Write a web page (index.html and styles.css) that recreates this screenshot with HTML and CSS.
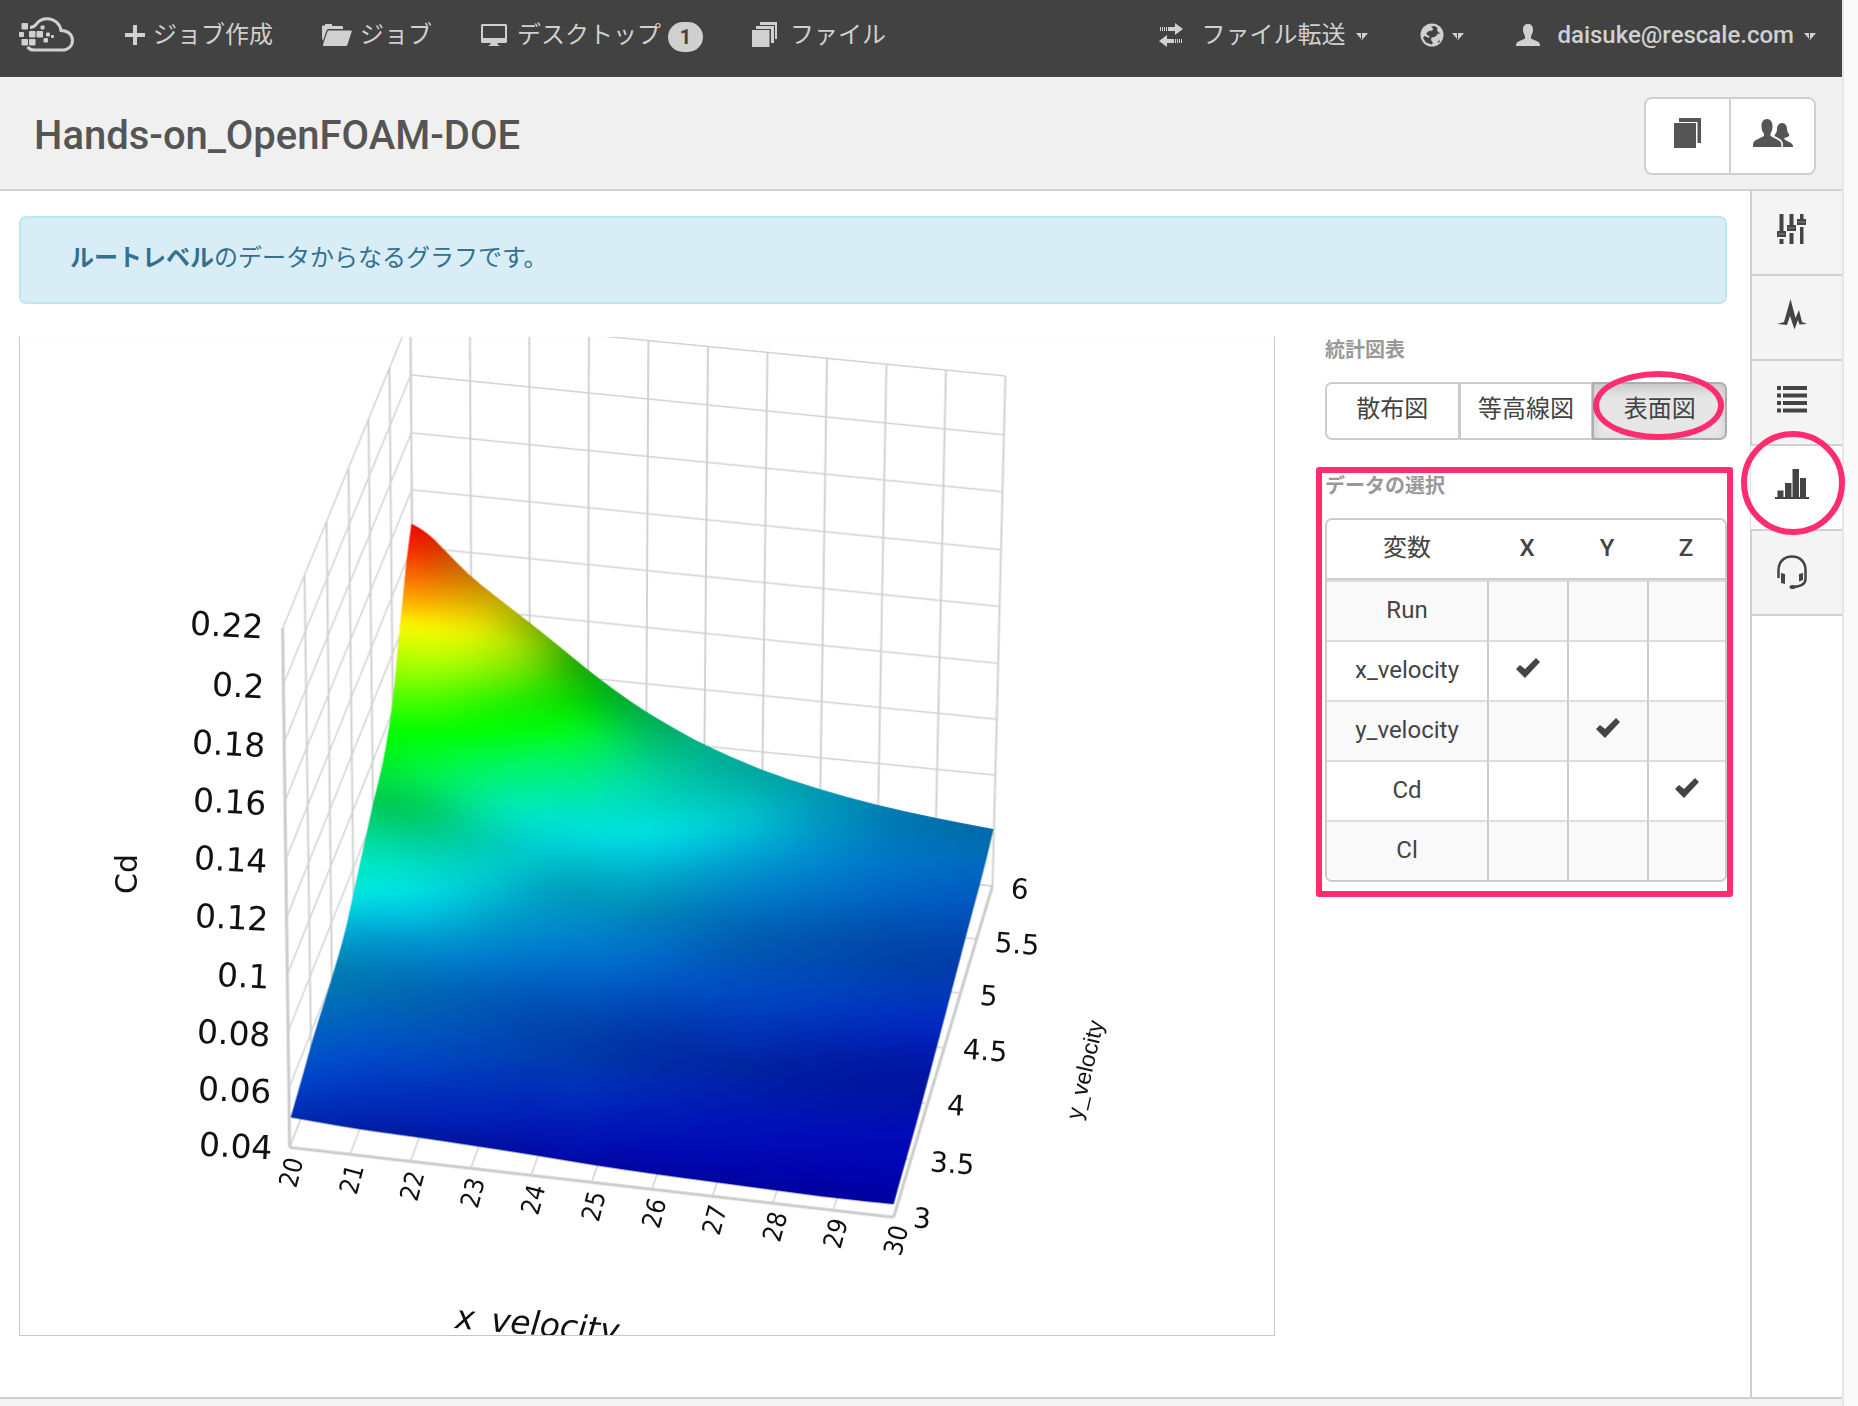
FILE: index.html
```
<!DOCTYPE html>
<html lang="ja">
<head>
  <meta charset="UTF-8">
  <meta name="viewport" content="width=device-width, initial-scale=1.0">
  <title>Hands-on_OpenFOAM-DOE</title>
  <link rel="stylesheet" href="styles.css">
</head>
<body>
  <div class="page">
    <header class="navbar">
      <a class="logo" href="#" aria-label="Home">
        <svg width="56" height="36" viewBox="0 0 56 36">
          <path d="M11 10.500C15 10.500 16 9 17.500 7C20 3.500 24 1.800 28 1.800C35.500 1.800 41 7 42 13.500C49 13.500 53.500 18 53.500 23.500C53.500 29 49 33 43.500 33H15C12 33 10 32 8.500 30" fill="none" stroke="currentColor" stroke-width="3"/>
          <g fill="currentColor">
            <rect x="2.500" y="6" width="6.500" height="6.500" rx="1"/>
            <rect x="0" y="15" width="5" height="5" rx="1"/>
            <rect x="2.500" y="22" width="6.500" height="6.500" rx="1"/>
            <rect x="10" y="14" width="6.500" height="6.500" rx="1"/>
            <rect x="10" y="22" width="6.500" height="6.500" rx="1"/>
            <rect x="17.500" y="14" width="6.500" height="6.500" rx="1"/>
            <rect x="21.500" y="8.500" width="4" height="4" rx="1"/>
            <rect x="27" y="15.500" width="4" height="4" rx="1"/>
            <rect x="24.500" y="21" width="4.500" height="4.500" rx="1"/>
            <rect x="32" y="18" width="3" height="3" rx="1"/>
          </g>
        </svg>
      </a>
      <nav class="nav nav-left">
        <a class="nav-item" href="#">
          <svg width="20" height="20" viewBox="0 0 20 20"><path d="M8 0h4v8h8v4h-8v8H8v-8H0V8h8z" fill="currentColor"/></svg>
          <span>ジョブ作成</span>
        </a>
        <a class="nav-item" href="#">
          <svg width="30" height="22" viewBox="0 0 30 22"><path d="M0 14V2.500Q0 1.500 1 1.500H3V0.500Q3 0 3.500 0H9.500Q10 0 10 0.500V2H20Q21 2 21 3V5H6.500Q5 5 4.500 6.500L1 17zM7 6.500H29Q30 6.500 29.700 7.500L25.500 20.500Q25 22 23.500 22H2Q0.500 22 1 20.500L5.500 7.500Q6 6.500 7 6.500z" fill="currentColor"/></svg>
          <span>ジョブ</span>
        </a>
        <a class="nav-item nav-desktop" href="#">
          <svg width="26" height="22" viewBox="0 0 26 22"><path d="M1.500 0H24.500Q26 0 26 1.500V17.500Q26 19 24.500 19H16.500V20.500L18.500 21.500V22H7.500V21.500L9.500 20.500V19H1.500Q0 19 0 17.500V1.500Q0 0 1.500 0zM2 2V14H24V2z" fill="currentColor" fill-rule="evenodd"/></svg>
          <span>デスクトップ</span>
          <span class="badge">1</span>
        </a>
        <a class="nav-item nav-files" href="#">
          <svg width="26" height="26" viewBox="0 0 26 26"><path d="M0 8H17.500V25H0zM4 4H22V21H19V7H4zM8 0H25V17H23V3H8z" fill="currentColor"/></svg>
          <span>ファイル</span>
        </a>
      </nav>
      <nav class="nav nav-right">
        <a class="nav-item nav-transfer" href="#">
          <svg width="24" height="24" viewBox="0 0 24 24"><path d="M1 4h1v4H1zM3 4h1v4H3zM5 4h1v4H5zM7 4h1v4H7zM9 4h7V0l8 6-8 6V8H9zM22 16h1v4h-1zM20 16h1v4h-1zM18 16h1v4h-1zM16 16h1v4h-1zM15 16H8v-4l-8 6 8 6v-4h7z" fill="currentColor"/></svg>
          <span>ファイル転送</span>
          <svg class="caret" width="12" height="7" viewBox="0 0 12 7"><path d="M0 0H12L6 7zM5 0V7H6V0z" fill="currentColor" fill-rule="evenodd"/></svg>
        </a>
        <a class="nav-item nav-globe" href="#" aria-label="Language">
          <svg width="24" height="24" viewBox="0 0 24 24">
            <circle cx="12" cy="12" r="11.500" fill="currentColor"/>
            <path d="M11 3.500L15 3L17.500 5L17 7.500L20.500 11L18 10.500L17 12L14.500 14L11.500 14.500L11 17L13 20L11.500 21.500L6 19.500L3 15L4.500 13L9 15L9.500 13L7 12L6.500 10L9 8L12.500 7.500L13 5.500z" fill="#424242"/>
            <path d="M17.500 19L20 16.500L19 20z" fill="#424242"/>
          </svg>
          <svg class="caret" width="12" height="7" viewBox="0 0 12 7"><path d="M0 0H12L6 7zM5 0V7H6V0z" fill="currentColor" fill-rule="evenodd"/></svg>
        </a>
        <a class="nav-item nav-user" href="#">
          <svg width="24" height="22" viewBox="0 0 24 22"><path d="M12 0C15 0 17 2 17 5.500C17 8.500 16 10.500 15 12V14.500L21.500 17.500C23.500 18.500 24 19.500 24 22H0C0 19.500 0.500 18.500 2.500 17.500L9 14.500V12C8 10.500 7 8.500 7 5.500C7 2 9 0 12 0z" fill="currentColor"/></svg>
          <span class="email">daisuke@rescale.com</span>
          <svg class="caret" width="12" height="7" viewBox="0 0 12 7"><path d="M0 0H12L6 7zM5 0V7H6V0z" fill="currentColor" fill-rule="evenodd"/></svg>
        </a>
      </nav>
    </header>

    <div class="title-bar">
      <h1>Hands-on_OpenFOAM-DOE</h1>
      <div class="title-actions">
        <button type="button" aria-label="Copy">
          <svg width="28" height="30" viewBox="0 0 28 30"><path d="M0 5H22V30H0zM5 0H27V25H23.500V4H5z" fill="currentColor"/></svg>
        </button>
        <button type="button" aria-label="Share">
          <svg width="40" height="28" viewBox="0 0 40 28">
            <path d="M14 0C17.500 0 19.500 3 19.500 7C19.500 11 18.500 13 17.500 14.500V17L25 21C28 22.500 28.500 24 28.500 28H0C0 24 0.500 22.500 3 21L11 17V14.500C9.500 13 8.500 11 8.500 7C8.500 3 10.500 0 14 0z" fill="currentColor"/>
            <path d="M29 4C32 4 34 6.500 34 10C34 13 35.500 14 36.500 16C35.500 18 34 18.500 31.500 18.500V20.500L37 23.500C39.500 25 40 25.500 40 28H30C30 23.500 29.500 21.500 26 19.500L21.500 17C22 14.500 24 14 24 10C24 6.500 26 4 29 4z" fill="currentColor"/>
          </svg>
        </button>
      </div>
    </div>

    <div class="main">
      <div class="content">
        <div class="alert"><strong>ルートレベル</strong>のデータからなるグラフです。</div>

        <div class="columns">
          <div class="chart">
            <canvas id="surface" width="1256" height="1000"></canvas>
            <svg class="chart-labels" viewBox="0 0 1256 1000">
              <g id="z-labels" class="z-labels"></g>
              <g id="x-labels" class="x-labels"></g>
              <g id="y-labels" class="y-labels"></g>
              <text class="z-title" transform="translate(117 558) rotate(-90)">Cd</text>
              <text class="y-title" transform="translate(1063 785) rotate(-77)">y_velocity</text>
              <text class="x-title" transform="translate(435 993) rotate(5)">x_velocity</text>
            </svg>
          </div>

          <div class="side">
            <h2>統計図表</h2>
            <div class="chart-types">
              <button type="button">散布図</button>
              <button type="button">等高線図</button>
              <button type="button" class="active">表面図</button>
            </div>

            <div class="data-panel">
              <h2>データの選択</h2>
              <div class="table-box">
                <table>
                  <thead>
                    <tr><th class="name">変数</th><th class="axis">X</th><th class="axis">Y</th><th>Z</th></tr>
                  </thead>
                  <tbody>
                    <tr><td>Run</td><td></td><td></td><td></td></tr>
                    <tr><td>x_velocity</td><td><svg class="check" width="24" height="20" viewBox="0 0 24 20"><path d="M0 11L4 7L9 11L20 0L24 4L9 20z" fill="currentColor"/></svg></td><td></td><td></td></tr>
                    <tr><td>y_velocity</td><td></td><td><svg class="check" width="24" height="20" viewBox="0 0 24 20"><path d="M0 11L4 7L9 11L20 0L24 4L9 20z" fill="currentColor"/></svg></td><td></td></tr>
                    <tr><td>Cd</td><td></td><td></td><td><svg class="check" width="24" height="20" viewBox="0 0 24 20"><path d="M0 11L4 7L9 11L20 0L24 4L9 20z" fill="currentColor"/></svg></td></tr>
                    <tr><td>Cl</td><td></td><td></td><td></td></tr>
                  </tbody>
                </table>
              </div>
            </div>
          </div>
        </div>
      </div>

      <nav class="rail">
        <a href="#" aria-label="Settings">
          <svg width="30" height="30" viewBox="0 0 30 30"><path d="M2.500 0H6.500V17H9V23H0V17H2.500zM2.500 25H6.500V30H2.500zM12.500 0H16.500V11H19V17H10V11H12.500zM12.500 19H16.500V30H12.500zM23 0H26.500V5H29V11H20V5H23zM23 13H26.500V30H23z" fill="currentColor"/><path d="M1 20H8M11 14H18M21 8H28" stroke="#888"/></svg>
        </a>
        <a href="#" aria-label="Status">
          <svg width="30" height="30" viewBox="0 0 30 30"><path d="M0 25L7 23L13.500 0L18.500 19L22 11L25 23L30 25L22.500 25.500L21 21L17.500 30.500L13 17L10 26z" fill="currentColor"/></svg>
        </a>
        <a href="#" aria-label="Logs">
          <svg width="30" height="30" viewBox="0 0 30 30"><path d="M0 2H4V6H0zM6 2H30V6H6zM0 9.500H4V13.500H0zM6 9.500H30V13.500H6zM0 17H4V21H0zM6 17H30V21H6zM0 24.500H4V28.500H0zM6 24.500H30V28.500H6z" fill="currentColor"/></svg>
        </a>
        <a href="#" class="active" aria-label="Charts">
          <svg width="34" height="30" viewBox="0 0 34 30"><path d="M0 28H2.500V21.500H8.500V28H10V14H16.500V28H17.500V0H24V28H25V9H31V28H34V30H0z" fill="currentColor"/></svg>
        </a>
        <a href="#" aria-label="Support">
          <svg width="30" height="34" viewBox="0 0 30 34"><path d="M1.500 23V15C1.500 7 7 1.500 15 1.500S28.500 7 28.500 15V24C28.500 29 24 31.500 16 32" fill="none" stroke="currentColor" stroke-width="2.500"/><path d="M4 18L8 19V29L4 28zM26 18L22 19V26.500L26 25z" fill="currentColor"/><ellipse cx="15.500" cy="32" rx="3" ry="2" fill="currentColor"/></svg>
        </a>
      </nav>
    </div>
    <footer class="footer"></footer>
  </div>
  <div class="gutter"></div>

  <script src="chart.js"></script>
</body>
</html>
```
FILE: styles.css
```
*,
*::after {
  box-sizing: border-box;
}

body {
  margin: 0;
  min-height: 100vh;
  display: flex;
  font-family: Roboto, "Noto Sans CJK JP", sans-serif;
  font-size: 24px;
  line-height: 36px;
  color: #444;
  background: #fff;
}

svg {
  display: block;
  flex: none;
}

a {
  color: inherit;
  text-decoration: none;
}

button {
  font: inherit;
  color: inherit;
  cursor: pointer;
}

.page {
  flex: 1;
  min-width: 0;
  display: flex;
  flex-direction: column;
}

.gutter {
  width: 16px;
  background: #fafafa;
  border-left: 2px solid #e7e7e7;
}

/* top navigation */
.navbar {
  display: flex;
  align-items: center;
  height: 77px;
  padding: 0 26px 8px 19px;
  background: #424242;
  color: #d0d0d0;
}

.nav {
  display: flex;
  align-items: center;
}

.nav-left {
  margin-left: 50px;
  gap: 49px;
}

.nav-right {
  margin-left: auto;
  gap: 52px;
}

.nav-item {
  display: flex;
  align-items: center;
  gap: 8px;
  white-space: nowrap;
}

.nav-desktop {
  gap: 10px;
}

.nav-files {
  gap: 12px;
}

.nav-transfer {
  gap: 18px;
}

.nav-user {
  gap: 17px;
}

.nav-transfer .caret,
.nav-user .caret {
  margin-left: -7px;
}

.caret {
  margin-top: 4px;
}

.email {
  font-weight: 500;
}

.badge {
  width: 35px;
  height: 30px;
  margin-top: 4px;
  margin-left: -3px;
  border-radius: 15px;
  background: #d0d0d0;
  color: #424242;
  font-size: 20px;
  line-height: 30px;
  font-weight: 700;
  text-align: center;
}

/* job title */
.title-bar {
  display: flex;
  align-items: center;
  justify-content: space-between;
  height: 114px;
  padding: 5px 26px 0 34px;
  background: #f0f0f0;
  border-bottom: 2px solid #d2d2d2;
}

h1 {
  margin: 0;
  font-size: 40px;
  line-height: 48px;
  font-weight: 500;
  color: #555;
}

.title-actions {
  display: flex;
  width: 172px;
  height: 78px;
  border: 2px solid #d0d0d0;
  border-radius: 8px;
  background: #fff;
  color: #555;
}

.title-actions button {
  flex: 1;
  display: flex;
  align-items: center;
  justify-content: center;
  padding: 0 0 6px;
  border: 0;
  background: none;
}

.title-actions button + button {
  border-left: 2px solid #d0d0d0;
}

.main {
  flex: 1;
  display: flex;
}

.content {
  flex: 1;
  min-width: 0;
  padding: 25px 23px 60px 19px;
}

.alert {
  height: 88px;
  padding: 22px 49px;
  border: 2px solid #bce8f1;
  border-radius: 7px;
  background: #d9edf7;
  color: #31708f;
}

.columns {
  display: flex;
  align-items: flex-start;
  gap: 50px;
  margin-top: 32px;
}

/* surface plot */
.chart {
  position: relative;
  flex: 1;
  min-width: 0;
  aspect-ratio: 1256 / 1000;
  overflow: hidden;
  border: 1px solid #c8c8c8;
  border-top-color: #fafafa;
}

.chart canvas,
.chart-labels {
  position: absolute;
  top: 0;
  left: 0;
  width: 100%;
  height: 100%;
}

.chart-labels {
  font-family: "DejaVu Sans", sans-serif;
  fill: #111;
}

.z-labels {
  font-size: 33px;
  text-anchor: end;
}

.x-labels {
  font-family: "DejaVu Sans Condensed", "DejaVu Sans", sans-serif;
  font-size: 26px;
  font-stretch: condensed;
  text-anchor: end;
}

.y-labels {
  font-size: 28px;
}

.z-title {
  font-size: 30px;
}

.y-title {
  font-family: "Liberation Sans", sans-serif;
  font-size: 23px;
}

.x-title {
  font-size: 33px;
  font-style: oblique;
}

/* right column */
.side {
  width: 402px;
}

h2 {
  margin: 0 0 19px;
  font-size: 20px;
  line-height: 26px;
  font-weight: 700;
  color: #999;
}

.chart-types {
  position: relative;
  display: flex;
  height: 58px;
}

.chart-types button {
  flex: 1 1 0;
  padding: 0 0 4px;
  border: 2px solid #ccc;
  background: #fff;
  white-space: nowrap;
}

.chart-types button + button {
  margin-left: -1px;
}

.chart-types button:first-child {
  border-radius: 7px 0 0 7px;
}

.chart-types button:last-child {
  border-radius: 0 7px 7px 0;
}

.chart-types .active {
  border-color: #adadad;
  background: #e6e6e6;
  box-shadow: inset 0 6px 10px rgba(0, 0, 0, 0.125);
}

/* highlight marks */
.chart-types::after,
.data-panel::after,
.rail .active::after {
  content: "";
  position: absolute;
  border: 6px solid #ff2d6e;
  pointer-events: none;
}

.chart-types::after {
  top: -11px;
  right: 3px;
  width: 131px;
  height: 69px;
  border-radius: 50%;
}

.data-panel {
  position: relative;
  margin-top: 33px;
}

.data-panel::after {
  inset: -6px -6px -15px -9px;
  border-radius: 3px;
}

.side {
  padding-top: 1px;
}

.table-box {
  border: 2px solid #ccc;
  border-radius: 7px;
  overflow: hidden;
}

table {
  width: 100%;
  table-layout: fixed;
  border-collapse: separate;
  border-spacing: 0;
  text-align: center;
}

th,
td {
  height: 60px;
  padding: 0 0 2px;
  border-top: 2px solid #ddd;
}

th {
  font-weight: 500;
  border-top: 0;
  border-bottom: 2px solid #ccc;
}

.name {
  width: 160px;
  font-weight: 400;
}

.axis {
  width: 80px;
}

td + td {
  border-left: 2px solid #ccc;
}

tbody tr:nth-child(odd) {
  background: #f9f9f9;
}

.check {
  margin: 0 auto 4px;
}

/* tab rail */
.rail {
  width: 92px;
  border-left: 2px solid #d0d0d0;
}

.rail a {
  position: relative;
  display: flex;
  align-items: center;
  justify-content: center;
  height: 85px;
  padding: 0 10px 8px 0;
  border-bottom: 2px solid #d0d0d0;
  background: #f4f4f4;
}

.rail .active {
  z-index: 1;
  margin-left: -2px;
  border-left: 1px solid #e0e0e0;
  background: #fff;
}

.rail a:last-child {
  padding-bottom: 2px;
}

.rail .active::after {
  top: -15px;
  left: -10px;
  width: 104px;
  height: 104px;
  border-radius: 50%;
}

.footer {
  height: 9px;
  border-top: 2px solid #d0d0d0;
  background: #f4f4f4;
}
```
FILE: chart.js
```
const canvas = document.getElementById('surface');
const ctx = canvas.getContext('2d');
const W = canvas.width;
const H = canvas.height;

function mix(a, b, t) {
  return a + (b - a) * t;
}

function line(x1, y1, x2, y2, width) {
  ctx.lineWidth = width;
  ctx.beginPath();
  ctx.moveTo(x1, y1);
  ctx.lineTo(x2, y2);
  ctx.stroke();
}

// Corners of the box, in chart units. y values per z level (0.22 down to 0.04)
const frontY = [292, 348, 406, 465, 524, 582, 639, 696, 753, 812];
const cornerY = [-20, 38, 96, 153, 210, 267, 324, 381, 437, 493];
const rightY = [39, 98, 155, 213, 270, 327, 383, 439, 495, 550];

// Floor positions per y value (3 up to 6)
const sideTop = [[263, 292], [285, 239], [307, 186], [329, 133], [349, 81], [370, 31], [391, -20]];
const sideBottom = [[270, 812], [292, 757], [313, 703], [335, 649], [355, 596], [375, 544], [395, 493]];
const rightFloor = [[875, 882], [890, 824], [907, 768], [924, 712], [940, 657], [957, 603], [974, 550]];

function drawGrid() {
  ctx.strokeStyle = '#d2d2d2';
  for (let i = 0; i < 10; i++) {
    const t = i / 9;
    line(mix(263, 270, t), frontY[i], mix(391, 395, t), cornerY[i], 1.5);
    line(mix(391, 395, t), cornerY[i], mix(987, 974, t), rightY[i], 1.5);
  }
  for (let i = 0; i < 7; i++) {
    line(...sideTop[i], ...sideBottom[i], 2);
    line(...sideBottom[i], ...rightFloor[i], 1.5);
  }
  for (let i = 0; i <= 10; i++) {
    const t = i / 10;
    line(mix(391, 987, t), mix(-20, 39, t), mix(395, 974, t), mix(493, 550, t), 2);
    line(mix(395, 974, t), mix(493, 550, t), mix(270, 875, t), mix(812, 882, t), 1.5);
  }
  // axes
  ctx.strokeStyle = '#ccc';
  line(263, 292, 270, 812, 3);
  line(270, 812, 875, 882, 3);
  line(875, 882, 974, 550, 3);
}

// Back, right, front and left edges, clockwise from the peak
const edges = [
  [[392, 187], [406, 194], [423, 211], [450, 239], [478, 261], [509, 285], [538, 308], [568, 333],
    [597, 355], [626, 375], [655, 392], [684, 408], [742, 434], [800, 453], [858, 469], [917, 482], [975, 493]],
  [[975, 493], [968, 524], [954, 576], [940, 629], [926, 682], [911, 739], [897, 791], [883, 840], [875, 869]],
  [[875, 869], [816, 863], [756, 855], [696, 847], [637, 839], [575, 830], [516, 820], [458, 811],
    [399, 802], [339, 794], [271, 782]],
  [[271, 782], [283, 741], [294, 700], [306, 663], [316, 630], [326, 595], [335, 552], [345, 507],
    [354, 465], [363, 430], [370, 390], [375, 350], [379, 303], [383, 266], [387, 223], [392, 187]]
];

// Shaded colours down the surface at a few x positions: [x, [y, colour], ...]
const columns = [
  [270, [640, '0080b0'], [665, '0070b8'], [690, '0066be'], [715, '0057c8'], [745, '0043c8'], [770, '0032b8'], [790, '0024a6']],
  [310, [430, '00d050'], [500, '00e0a0'], [560, '00e8e0'], [600, '00a0cc'], [640, '0078b0'], [665, '0070b8'], [690, '0062c0'], [715, '0054c8'], [745, '0040c8'], [770, '002eb8'], [795, '0020a4']],
  [345, [187, 'ff0000'], [285, 'fffa00'], [395, '00ff00'], [440, '00dc40'], [465, '00c850'], [500, '00dc98'], [530, '00e8c4'], [555, '00e8e2'], [575, '00c8e0'], [600, '00a0d0'], [625, '0082be'], [645, '0076b0'], [670, '0068b8'], [700, '0056c6'], [730, '0044c8'], [760, '0030bc'], [795, '001ea4']],
  [392, [187, 'ff0000'], [215, 'ff2800'], [250, 'ff8000'], [270, 'ffb800'], [288, 'fffa00'], [310, 'd0ff00'], [335, '98ff00'], [360, '50ff00'], [395, '00ff00'], [425, '00f828'], [445, '00e84a'], [465, '00cc50'], [480, '00c860'], [497, '00d08a'], [516, '00d8b0'], [534, '00e0cc'], [556, '00e2e2'], [581, '00c0e0'], [603, '0098d0'], [625, '0080c4'], [646, '006eb6'], [668, '0062b2'], [697, '0056be'], [726, '0046c2'], [752, '0034be'], [775, '0026b8'], [803, '0018a0']],
  [425, [200, 'c02800'], [230, 'd86000'], [255, 'ee9800'], [275, 'f8cc00'], [293, 'f8f800'], [315, 'ccff00'], [335, '98ff00'], [360, '50fc00'], [395, '00ff00'], [420, '00fc38'], [445, '00f060'], [465, '00dc70'], [485, '00cc80'], [505, '00cc9c'], [525, '00d4bc'], [550, '00d8d8'], [575, '00c0dc'], [600, '009cd0'], [625, '007ecc'], [646, '006abc'], [668, '005eb2'], [697, '0052bc'], [726, '0044be'], [752, '0032bc'], [781, '0022b8'], [807, '0014a0']],
  [477, [235, 'b87800'], [262, 'c8a800'], [280, 'd8cc00'], [300, 'd0f000'], [330, '90f000'], [350, '50f200'], [375, '10f600'], [393, '00ff00'], [420, '00f84c'], [445, '00f480'], [465, '00ecaa'], [487, '00dcb8'], [505, '00ccb8'], [527, '00ccc8'], [545, '00c4d0'], [567, '00b0cc'], [588, '0098c8'], [607, '0088cc'], [625, '0078cc'], [647, '0064c0'], [668, '0056b4'], [690, '004eb4'], [719, '0042b8'], [752, '0030b8'], [781, '0020b8'], [812, '0010a0']],
  [515, [288, '88a800'], [310, '90d400'], [335, '60e400'], [360, '20e800'], [393, '00fc08'], [420, '00f85c'], [445, '00f08c'], [465, '00ecb4'], [487, '00e0cc'], [507, '00d0d0'], [530, '00bcc8'], [550, '00a8c4'], [572, '009cc8'], [595, '008ccc'], [620, '0076cc'], [645, '0062c2'], [670, '0050b4'], [695, '0044ac'], [720, '003eb2'], [752, '002eb8'], [781, '001eb8'], [820, '0008a4']],
  [561, [328, '18a000'], [345, '10c000'], [370, '00e000'], [390, '00f818'], [410, '00f848'], [435, '00f07c'], [460, '00eaac'], [482, '00e4d0'], [500, '00dcdc'], [520, '00c4cc'], [540, '00acc0'], [558, '0098bc'], [577, '0090c4'], [603, '0082cc'], [625, '0070cc'], [647, '0060c4'], [668, '0050b8'], [694, '0042a8'], [714, '003ba8'], [738, '0038b4'], [760, '002ebc'], [785, '001eb8'], [810, '0010b4'], [828, '0008a4']],
  [600, [355, '00a428'], [375, '00bc38'], [400, '00dc54'], [425, '00e080'], [450, '00e4ac'], [475, '00e0c8'], [496, '00e2e0'], [516, '00ccdc'], [540, '00b0cc'], [565, '0098bc'], [585, '0086c0'], [608, '0078c8'], [635, '0066c8'], [660, '0052bc'], [690, '003eac'], [715, '0034a4'], [745, '002eb4'], [775, '001eb8'], [805, '000eb4'], [834, '0005a2']],
  [640, [383, '00a858'], [405, '00bc74'], [430, '00cc98'], [460, '00d4b8'], [480, '00dcd0'], [495, '00e0e0'], [512, '00ccdc'], [530, '00b4d0'], [547, '00a0c4'], [562, '0090bc'], [580, '007eb8'], [600, '0074c4'], [622, '0068c8'], [648, '0056c4'], [672, '0044b8'], [698, '0034a8'], [722, '002ca4'], [755, '0026b4'], [790, '0016b8'], [820, '0008b0'], [840, '0004a0']],
  [720, [424, '00a898'], [445, '00b4a8'], [463, '00c0bc'], [480, '00c8cc'], [496, '00c0d4'], [515, '00acd4'], [535, '0096cc'], [557, '0082c8'], [580, '006ebc'], [600, '0060b2'], [622, '0056b4'], [648, '004ec0'], [675, '0040bc'], [700, '0032b4'], [728, '0026a0'], [755, '001eac'], [790, '0012b8'], [822, '0008b2'], [851, '0002a0']],
  [800, [453, '0098b0'], [470, '009abc'], [490, '0098c4'], [510, '0090cc'], [530, '0084cc'], [555, '0074c8'], [580, '0062ba'], [602, '0054ac'], [625, '004cb2'], [650, '0046bc'], [675, '003abe'], [700, '002ab4'], [722, '001fa2'], [745, '001a9e'], [775, '0015b0'], [800, '000cb8'], [830, '0004b0'], [861, '00009e']],
  [880, [474, '0078b0'], [500, '0076b8'], [530, '0072c8'], [560, '0062c4'], [585, '0052b4'], [610, '0046a8'], [632, '003faa'], [655, '003cb8'], [680, '002fc0'], [705, '0020b6'], [732, '0017a2'], [755, '0013a0'], [780, '0010b0'], [810, '0008b8'], [840, '0003b0'], [870, '0000a0']],
  [975, [492, '0068a8'], [515, '006cb4'], [540, '0062c0'], [575, '0054be'], [605, '0044b0'], [635, '0038a6'], [660, '0035b8'], [690, '0028c0'], [718, '0019b0'], [750, '00139e'], [780, '000eae'], [810, '0008b8'], [840, '0003b0'], [870, '0000a0']]
];

function rgb(hex) {
  return [0, 2, 4].map(i => parseInt(hex.substr(i, 2), 16));
}

function columnColors(stops) {
  const out = [];
  let k = 0;
  for (let y = 0; y < H; y++) {
    while (k < stops.length - 1 && stops[k + 1][0] <= y) k++;
    const a = stops[k];
    const b = stops[Math.min(k + 1, stops.length - 1)];
    const span = b[0] - a[0];
    const t = span ? Math.max(0, (y - a[0]) / span) : 0;
    const ca = rgb(a[1]);
    const cb = rgb(b[1]);
    out.push([mix(ca[0], cb[0], t), mix(ca[1], cb[1], t), mix(ca[2], cb[2], t)]);
  }
  // running average takes the corners off the ramp
  const r = 9;
  return out.map((c, y) => {
    const sum = [0, 0, 0];
    for (let d = -r; d <= r; d++) {
      const n = out[Math.min(H - 1, Math.max(0, y + d))];
      for (let i = 0; i < 3; i++) sum[i] += n[i];
    }
    return sum.map(v => v / (2 * r + 1));
  });
}

// Share of each column in the colour at x, averaged over a short span
function columnWeights(xs, x) {
  const weights = xs.map(() => 0);
  const r = 24;
  for (let d = -r; d <= r; d += 4) {
    const sx = Math.min(xs[xs.length - 1], Math.max(xs[0], x + d));
    let k = 0;
    while (k < xs.length - 2 && xs[k + 1] <= sx) k++;
    const t = (sx - xs[k]) / (xs[k + 1] - xs[k]);
    weights[k] += (1 - t) / 13;
    weights[k + 1] += t / 13;
  }
  return weights.map((w, k) => [k, w]).filter(w => w[1] > 0);
}

function traceEdge(points) {
  ctx.lineTo(...points[0]);
  for (let i = 1; i < points.length - 1; i++) {
    const [x, y] = points[i];
    const [nx, ny] = points[i + 1];
    ctx.quadraticCurveTo(x, y, (x + nx) / 2, (y + ny) / 2);
  }
  ctx.lineTo(...points[points.length - 1]);
}

function drawSurface() {
  const layer = document.createElement('canvas');
  layer.width = W;
  layer.height = H;
  const lctx = layer.getContext('2d');
  const image = lctx.createImageData(W, H);
  const xs = columns.map(c => c[0]);
  const ramps = columns.map(c => columnColors(c.slice(1)));

  for (let x = xs[0] - 2; x <= xs[xs.length - 1] + 2; x++) {
    const weights = columnWeights(xs, x);
    for (let y = 170; y < 890; y++) {
      const p = (y * W + x) * 4;
      for (let i = 0; i < 3; i++) {
        let v = 0;
        for (const [k, w] of weights) v += ramps[k][y][i] * w;
        image.data[p + i] = v;
      }
      image.data[p + 3] = 255;
    }
  }
  lctx.putImageData(image, 0, 0);

  ctx.save();
  ctx.beginPath();
  edges.forEach(traceEdge);
  ctx.closePath();
  ctx.clip();
  ctx.drawImage(layer, 0, 0);
  ctx.restore();
}

function addLabel(group, text, x, y, angle) {
  const el = document.createElementNS('http://www.w3.org/2000/svg', 'text');
  el.setAttribute('transform', `translate(${x} ${y}) rotate(${angle})`);
  el.textContent = text;
  document.getElementById(group).appendChild(el);
}

drawGrid();
drawSurface();

['0.22', '0.2', '0.18', '0.16', '0.14', '0.12', '0.1', '0.08', '0.06', '0.04'].forEach((text, i) => {
  addLabel('z-labels', text, 243 + i, [302, 362, 421, 479, 537, 595, 653, 711, 768, 824][i], 3);
});
for (let i = 0; i <= 10; i++) {
  addLabel('x-labels', String(20 + i), 284 + i * 60.6, 825 + i * 6.8, -75);
}
['3', '3.5', '4', '4.5', '5', '5.5', '6'].forEach((text, i) => {
  addLabel('y-labels', text, [894, 911, 928, 944, 961, 976, 992][i], [892, 836, 779, 723, 669, 616, 562][i], 4);
});
```
